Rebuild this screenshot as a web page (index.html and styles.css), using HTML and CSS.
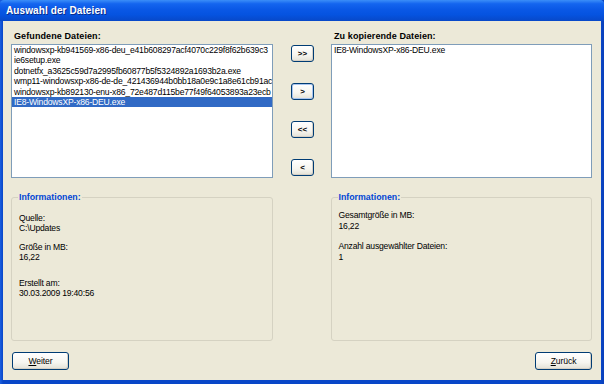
FILE: index.html
```html
<!DOCTYPE html>
<html lang="de">
<head>
<meta charset="utf-8">
<title>Auswahl der Dateien</title>
<link rel="stylesheet" href="styles.css">
</head>
<body>
<div class="window">
  <div class="titlebar">Auswahl der Dateien</div>
  <div class="body">
    <div class="top">
      <div class="col">
        <div class="label">Gefundene Dateien:</div>
        <div class="listbox">
          <div class="item">windowsxp-kb941569-x86-deu_e41b608297acf4070c229f8f62b639c3</div>
          <div class="item">ie6setup.exe</div>
          <div class="item">dotnetfx_a3625c59d7a2995fb60877b5f5324892a1693b2a.exe</div>
          <div class="item">wmp11-windowsxp-x86-de-de_421436944b0bb18a0e9c1a8e61cb91ac</div>
          <div class="item">windowsxp-kb892130-enu-x86_72e487d115be77f49f64053893a23ecb</div>
          <div class="item selected">IE8-WindowsXP-x86-DEU.exe</div>
        </div>
      </div>
      <div class="movers">
        <button class="btn small">&gt;&gt;</button>
        <button class="btn small focus">&gt;</button>
        <button class="btn small">&lt;&lt;</button>
        <button class="btn small">&lt;</button>
      </div>
      <div class="col">
        <div class="label">Zu kopierende Dateien:</div>
        <div class="listbox">
          <div class="item">IE8-WindowsXP-x86-DEU.exe</div>
        </div>
      </div>
    </div>
    <div class="groups">
      <fieldset class="group">
        <legend>Informationen:</legend>
        <div class="info">
          <p>Quelle:<br>C:\Updates</p>
          <p>Größe in MB:<br>16,22</p>
          <p class="later">Erstellt am:<br>30.03.2009 19:40:56</p>
        </div>
      </fieldset>
      <div class="spacer"></div>
      <fieldset class="group">
        <legend>Informationen:</legend>
        <div class="info right">
          <p>Gesamtgröße in MB:<br>16,22</p>
          <p>Anzahl ausgewählter Dateien:<br>1</p>
        </div>
      </fieldset>
    </div>
    <div class="footer">
      <button class="btn wide"><u>W</u>eiter</button>
      <button class="btn wide"><u>Z</u>urück</button>
    </div>
  </div>
</div>
</body>
</html>
```
FILE: styles.css
```css
html, body {
  margin: 0;
  padding: 0;
  width: 604px;
  height: 384px;
  overflow: hidden;
  font-family: "Liberation Sans", Arial, sans-serif;
  font-size: 8.6px;
  letter-spacing: -0.2px;
  color: #000;
}
.window {
  width: 604px;
  height: 384px;
  box-sizing: border-box;
  display: flex;
  flex-direction: column;
  padding: 0 3px 4px 3px;
  background: linear-gradient(to right, #1b5fe0 0, #0846c8 3px, #0846c8 601px, #0a3fb8 604px);
}
.titlebar {
  height: 21px;
  margin: 0 -3px;
  padding-left: 6px;
  display: flex;
  align-items: center;
  color: #fff;
  font-weight: bold;
  font-size: 10px;
  letter-spacing: 0.1px;
  background: linear-gradient(to bottom, #3b8ef8 0%, #1465ef 18%, #0a58e6 45%, #0553e0 70%, #0848c8 100%);
  text-shadow: 1px 1px 0 #0a2d8a;
  border-radius: 4px 4px 0 0;
}
.body {
  flex: 1;
  background: #ece9d8;
  padding: 9px 9px 0 8px;
  display: flex;
  flex-direction: column;
}
.top {
  display: flex;
}
.col {
  display: flex;
  flex-direction: column;
  width: 262px;
}
.label {
  font-weight: bold;
  font-size: 9px;
  height: 14px;
  line-height: 13px;
  padding-left: 3px;
  letter-spacing: 0.1px;
}
.listbox {
  height: 134px;
  box-sizing: border-box;
  border: 1px solid #7f9db9;
  background: #fff;
  padding: 0;
  overflow: hidden;
}
.item {
  height: 10.4px;
  line-height: 10.4px;
  padding-left: 2px;
  white-space: nowrap;
  overflow: hidden;
}
.item.selected {
  background: #316ac5;
  color: #fff;
}
.movers {
  width: 58px;
  flex: none;
  padding-top: 15px;
  display: flex;
  flex-direction: column;
  align-items: center;
  gap: 21px;
}
.btn {
  font-family: "Liberation Sans", Arial, sans-serif;
  font-size: 8.6px;
  letter-spacing: -0.1px;
  color: #000;
  box-sizing: border-box;
  border: 1px solid #003c74;
  border-radius: 3px;
  background: linear-gradient(to bottom, #ffffff 0%, #f6f5ef 60%, #e3e1d6 100%);
  padding: 0;
  margin: 0;
  box-shadow: inset -1px -1px 0 #d6d0c5;
}
.btn.small {
  width: 23px;
  height: 17px;
  font-weight: bold;
  font-size: 8px;
  letter-spacing: 0;
  line-height: 15px;
  margin-left: 1px;
}
.btn.focus {
  box-shadow: inset 0 0 0 1px #a8c5f0, inset -1px -1px 0 #d6d0c5;
}
.groups {
  display: flex;
  margin-top: 14px;
}
.spacer {
  width: 58px;
  flex: none;
}
.group {
  width: 262px;
  height: 149px;
  box-sizing: border-box;
  margin: 0;
  padding: 0 0 0 7px;
  border: 1px solid #d5d2c2;
  border-radius: 3px;
}
.group legend {
  color: #0046d5;
  font-weight: bold;
  font-size: 8.8px;
  letter-spacing: 0;
  padding: 0 1px;
  margin-left: -1px;
  line-height: 10px;
}
.info {
  padding-top: 12px;
}
.info p {
  margin: 0 0 10px 0;
  line-height: 9.5px;
}
.info p.later {
  margin-top: 17px;
}
.info.right {
  padding-top: 8px;
}
.info.right p {
  line-height: 11px;
  margin-bottom: 9px;
}
.footer {
  margin-top: 11px;
  display: flex;
  justify-content: space-between;
  padding-left: 1px;
}
.btn.wide {
  width: 57px;
  height: 18px;
  line-height: 16px;
}
```
